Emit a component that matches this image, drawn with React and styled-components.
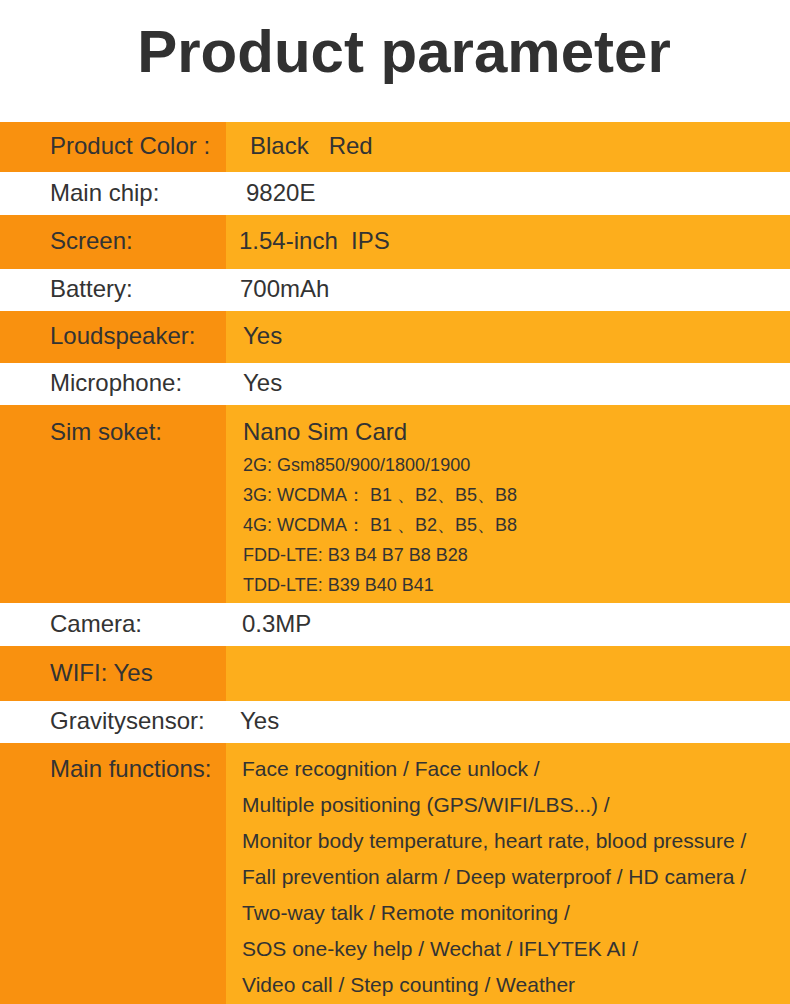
import React from "react";
import styled, { createGlobalStyle } from "styled-components";

const GlobalStyle = createGlobalStyle`
  body {
    margin: 0;
    background: #ffffff;
    font-family: "Liberation Sans", Arial, sans-serif;
    color: #333333;
  }
`;

const Page = styled.div`
  width: 790px;
`;

const Header = styled.header`
  height: 122px;
  box-sizing: border-box;
  padding-top: 17px;
`;

const Title = styled.h1`
  margin: 0;
  text-align: center;
  font-size: 60px;
  line-height: 69px;
  font-weight: bold;
  color: #313131;
  padding-left: 18px;
`;

const Row = styled.div`
  display: grid;
  grid-template-columns: 226px 1fr;
  height: ${(p) => (p.$h ? `${p.$h}px` : "auto")};
  background: ${(p) => (p.$orange ? "#fdae1c" : "#ffffff")};
`;

const Label = styled.div`
  display: flex;
  align-items: ${(p) => (p.$top ? "flex-start" : "center")};
  padding-left: 50px;
  padding-top: ${(p) => p.$pt || 0}px;
  padding-bottom: ${(p) => (p.$top ? 0 : 2)}px;
  font-size: 24px;
  line-height: ${(p) => p.$lh || 30}px;
  background: ${(p) => (p.$orange ? "#f9910f" : "transparent")};
  white-space: pre;
`;

const Value = styled.div`
  display: flex;
  flex-direction: ${(p) => (p.$top ? "column" : "row")};
  align-items: ${(p) => (p.$top ? "flex-start" : "center")};
  padding-left: ${(p) => p.$indent}px;
  padding-top: ${(p) => p.$pt || 0}px;
  padding-bottom: ${(p) => (p.$pb !== undefined ? p.$pb : 2)}px;
  font-size: 24px;
  line-height: 30px;
  white-space: pre;
`;

const MainLine = styled.div`
  font-size: 24px;
  line-height: 30px;
  margin-bottom: 3px;
`;

const SubLine = styled.div`
  font-size: 18px;
  line-height: 30px;
`;

const FeatureLine = styled.div`
  font-size: 21px;
  line-height: 36px;
`;

const simLines = [
  "2G: Gsm850/900/1800/1900",
  "3G: WCDMA\uff1a B1 \u3001B2\u3001B5\u3001B8",
  "4G: WCDMA\uff1a B1 \u3001B2\u3001B5\u3001B8",
  "FDD-LTE: B3 B4 B7 B8 B28",
  "TDD-LTE: B39 B40 B41",
];

const features = [
  "Face recognition / Face unlock /",
  "Multiple positioning (GPS/WIFI/LBS...) /",
  "Monitor body temperature, heart rate, blood pressure /",
  "Fall prevention alarm / Deep waterproof / HD camera /",
  "Two-way talk / Remote monitoring /",
  "SOS one-key help / Wechat / IFLYTEK AI /",
  "Video call / Step counting / Weather",
];

const simple = [
  { label: "Product Color :", value: "Black   Red", h: 50, orange: true, indent: 24 },
  { label: "Main chip:", value: "9820E", h: 43, indent: 20 },
  { label: "Screen:", value: "1.54-inch  IPS", h: 54, orange: true, indent: 13 },
  { label: "Battery:", value: "700mAh", h: 42, indent: 14 },
  { label: "Loudspeaker:", value: "Yes", h: 52, orange: true, indent: 17 },
  { label: "Microphone:", value: "Yes", h: 42, indent: 17 },
];

const after = [
  { label: "Camera:", value: "0.3MP", h: 43, indent: 16 },
  { label: "WIFI: Yes", value: "", h: 55, orange: true, indent: 16 },
  { label: "Gravitysensor:", value: "Yes", h: 42, indent: 14 },
];

const SimpleRow = ({ row }) => (
  <Row $h={row.h} $orange={row.orange}>
    <Label $orange={row.orange}>{row.label}</Label>
    <Value $indent={row.indent}>{row.value}</Value>
  </Row>
);

export default function App() {
  return (
    <Page>
      <GlobalStyle />
      <Header>
        <Title>Product parameter</Title>
      </Header>

      {simple.map((row) => (
        <SimpleRow key={row.label} row={row} />
      ))}

      <Row $h={198} $orange>
        <Label $orange $top $pt={12}>
          Sim soket:
        </Label>
        <Value $top $indent={17} $pt={12} $pb={2}>
          <MainLine>Nano Sim Card</MainLine>
          {simLines.map((line) => (
            <SubLine key={line}>{line}</SubLine>
          ))}
        </Value>
      </Row>

      {after.map((row) => (
        <SimpleRow key={row.label} row={row} />
      ))}

      <Row $orange>
        <Label $orange $top $pt={8} $lh={36}>
          Main functions:
        </Label>
        <Value $top $indent={16} $pt={8} $pb={10}>
          {features.map((line) => (
            <FeatureLine key={line}>{line}</FeatureLine>
          ))}
        </Value>
      </Row>
    </Page>
  );
}
